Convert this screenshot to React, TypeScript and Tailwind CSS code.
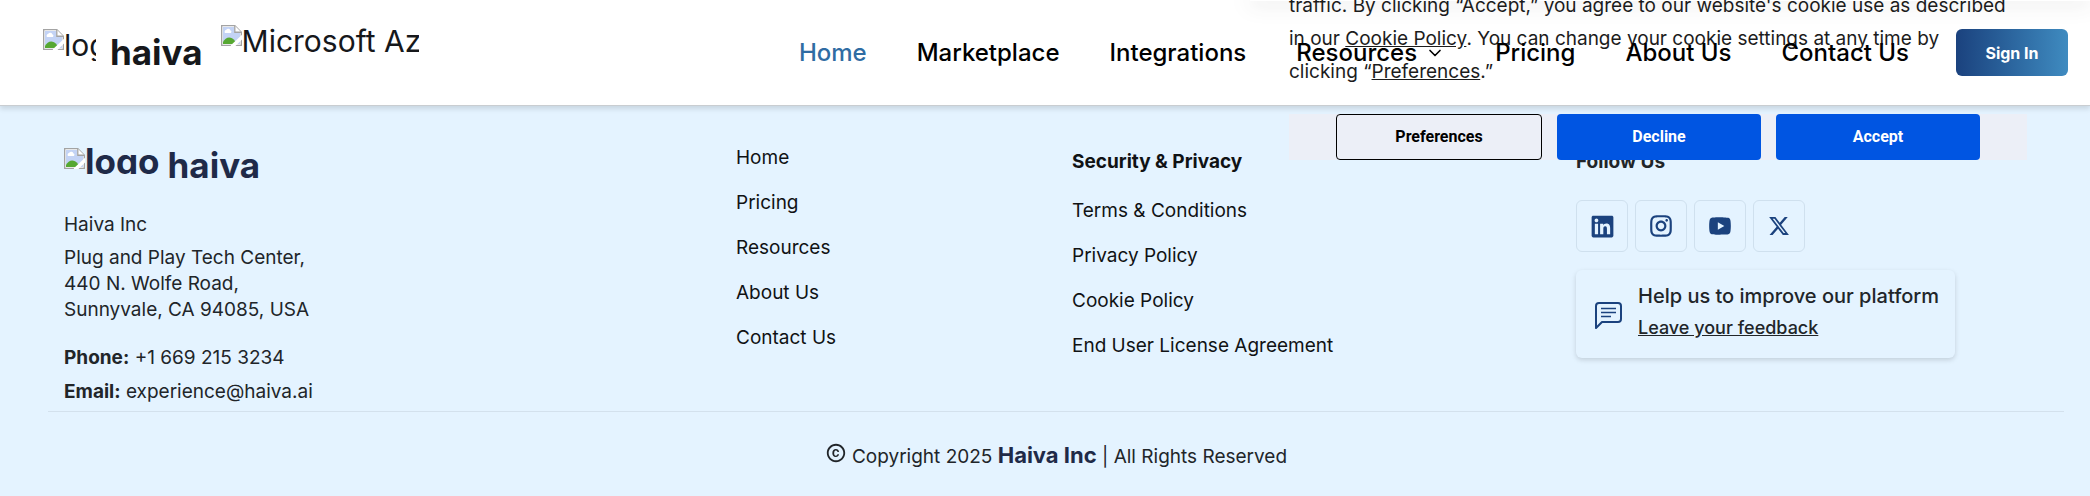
import type { ReactNode } from "react";
import { RiInstagramLine, RiYoutubeFill, RiLinkedinBoxFill } from "react-icons/ri";
import { FaXTwitter } from "react-icons/fa6";
import { MdCopyright } from "react-icons/md";
import { ChevronDown } from "lucide-react";

const navItems = [
  "Home",
  "Marketplace",
  "Integrations",
  "Resources",
  "Pricing",
  "About Us",
  "Contact Us",
];

const pageLinks = ["Home", "Pricing", "Resources", "About Us", "Contact Us"];

const legalLinks = [
  "Terms & Conditions",
  "Privacy Policy",
  "Cookie Policy",
  "End User License Agreement",
];

const socials = [
  { name: "LinkedIn", icon: <RiLinkedinBoxFill size={29} /> },
  { name: "Instagram", icon: <RiInstagramLine size={26} /> },
  { name: "YouTube", icon: <RiYoutubeFill size={26} /> },
  { name: "X", icon: <FaXTwitter size={22} /> },
];

const MissingImage = () => (
  <svg viewBox="0 0 16 16" className="size-[21px] shrink-0" aria-hidden="true">
    <path d="M.5.5h10l5 5v10H.5z" fill="#fff" stroke="#a3a3a3" />
    <path d="M1.500 1.500H10V6h4.500v8.500h-13z" fill="#c3d3f5" />
    <path d="M3 6a1.500 1.500 0 0 1 1-2.300 1.800 1.800 0 0 1 3.200.5A1 1 0 0 1 7.500 6z" fill="#fff" />
    <path d="M1.500 14.500V13c2-4 6-5 9-1l1.500 2.500z" fill="#56a832" />
    <path d="M16 7.500 7.500 15.500V16h3.500l5-5z" fill="#fff" />
    <path d="M10.500.5v5h5" fill="#fff" stroke="#a3a3a3" />
  </svg>
);

const FooterList = ({ items }: { items: string[] }) => (
  <ul className="flex flex-col gap-[18px] leading-[27px]">
    {items.map((item) => (
      <li key={item}>
        <a href="#">{item}</a>
      </li>
    ))}
  </ul>
);

const BannerButton = ({ children, outlined }: { children: ReactNode; outlined?: boolean }) => (
  <button
    type="button"
    className={
      outlined
        ? "h-[46px] flex-1 rounded-[4px] border border-black bg-[#eceff7] text-black"
        : "h-[46px] flex-1 rounded-[4px] bg-[#0055e2] text-white"
    }
  >
    {children}
  </button>
);

const CookieBanner = () => (
  <section
    aria-label="Cookies"
    className="absolute -top-[11px] right-[63px] w-[738px]"
  >
    <p className="mb-[26px] text-[19px] leading-[33px] whitespace-nowrap text-[#1c1c1c]">
      traffic. By clicking “Accept,” you agree to our website's cookie use as described
      <br />
      in our <a href="#" className="underline">Cookie Policy</a>. You can change your
      cookie settings at any time by
      <br />
      clicking “<a href="#" className="underline">Preferences</a>.”
    </p>
    <div className="flex gap-[15px] bg-[#eceff7] px-[47px] font-[Roboto] text-base font-bold">
      <BannerButton outlined>Preferences</BannerButton>
      <BannerButton>Decline</BannerButton>
      <BannerButton>Accept</BannerButton>
    </div>
  </section>
);

const Header = () => (
  <header className="relative z-10 border-b border-[#c9cdd1] bg-white shadow-[0_3px_5px_rgba(0,0,0,0.12)]">
    <div className="absolute inset-x-0 top-0 h-8 overflow-hidden">
      <div className="ml-auto h-px w-[840px] shadow-[0_0_20px_rgba(0,0,0,0.8)]" />
    </div>
    <CookieBanner />
    <div className="pointer-events-none relative flex h-[105px] items-center justify-between pr-[22px] pl-[43px]">
      <div className="flex h-14 items-start text-[30px] leading-8 text-[#16181b]">
        <span className="mt-1 flex w-[53px] overflow-hidden">
          <MissingImage />
          logo
        </span>
        <strong className="mr-[18px] ml-[14px] text-[35px] leading-[54px]">haiva</strong>
        <span className="flex w-[198px] overflow-hidden whitespace-nowrap">
          <MissingImage />
          Microsoft Azure
        </span>
      </div>
      <div className="pointer-events-auto flex items-center gap-[47px]">
        <nav className="flex gap-[50px] text-2xl font-medium text-black">
          {navItems.map((item) => (
            <a
              key={item}
              href="#"
              className="flex items-center gap-2 first:text-[#2f6ca3]"
            >
              {item}
              {item === "Resources" && <ChevronDown size={20} />}
            </a>
          ))}
        </nav>
        <button
          type="button"
          className="h-[47px] w-[112px] rounded-[6px] bg-linear-to-r from-[#1b427e] to-[#3f8bc0] text-base font-bold text-white"
        >
          Sign In
        </button>
      </div>
    </div>
  </header>
);

const Footer = () => (
  <footer className="bg-[#e4f3ff] pt-[38px] pr-[26px] pb-6 pl-12 text-[19px] text-[#212529]">
    <div className="grid grid-cols-12 border-b border-[#d3e1ed] [&>div]:px-4">
      <div className="col-span-4 pt-1 pb-[6px]">
        <div className="flex items-start gap-2 text-[35px] leading-[34px] font-bold text-[#1f2a48]">
          <span className="flex h-[26px] overflow-hidden leading-[26px]">
            <MissingImage />
            logo
          </span>
          <span>haiva</span>
        </div>
        <p className="mt-[29px] leading-[27px]">Haiva Inc</p>
        <address className="mt-[7px] leading-[26px] not-italic">
          Plug and Play Tech Center,
          <br />
          440 N. Wolfe Road,
          <br />
          Sunnyvale, CA 94085, USA
        </address>
        <p className="mt-[21px] leading-[27px]">
          <strong>Phone:</strong> +1 669 215 3234
        </p>
        <p className="mt-[7px] leading-[27px]">
          <strong>Email:</strong> experience@haiva.ai
        </p>
      </div>
      <div className="col-span-2 text-[#101214]">
        <FooterList items={pageLinks} />
      </div>
      <div className="col-span-3 pt-1 text-[#101214]">
        <h2 className="mb-[22px] leading-[27px] font-bold">Security &amp; Privacy</h2>
        <FooterList items={legalLinks} />
      </div>
      <div className="col-span-3 pt-1">
        <h2 className="mb-[25px] leading-[27px] font-bold">Follow Us</h2>
        <div className="flex gap-[7px] text-[#1b427e]">
          {socials.map(({ name, icon }) => (
            <a
              key={name}
              href="#"
              aria-label={name}
              className="flex size-[52px] items-center justify-center rounded-[6px] border border-[#cfe0ee]"
            >
              {icon}
            </a>
          ))}
        </div>
        <div className="mt-[18px] flex w-fit items-center gap-4 rounded-[6px] pt-[10px] pr-4 pb-4 pl-[19px] font-medium shadow-[0_2px_5px_rgba(0,0,0,0.15)]">
          <svg viewBox="0 0 27 27" className="mt-2 size-[27px]" fill="none" stroke="#1b427e" strokeWidth="2" aria-hidden="true">
            <path d="M1 26V4a3 3 0 0 1 3-3h19a3 3 0 0 1 3 3v13a3 3 0 0 1-3 3H7z" strokeLinejoin="round" />
            <path d="M6 6.500h15M6 10.500h15M6 14.500h10" strokeWidth="1.500" />
          </svg>
          <div>
            <p className="text-xl leading-[33px]">Help us to improve our platform</p>
            <a href="#" className="block text-[18px] leading-[29px] underline">
              Leave your feedback
            </a>
          </div>
        </div>
      </div>
    </div>
    <p className="flex items-start justify-center gap-[5px] pt-[30px] leading-[27px]">
      <MdCopyright size={22} />
      <span>
        Copyright 2025 <strong className="text-[22px] text-[#1f2a48]">Haiva Inc</strong> | All
        Rights Reserved
      </span>
    </p>
  </footer>
);

const App = () => (
  <div className="min-h-screen overflow-hidden bg-[#e4f3ff] font-[Inter,sans-serif]">
    <Header />
    <Footer />
  </div>
);

export default App;
